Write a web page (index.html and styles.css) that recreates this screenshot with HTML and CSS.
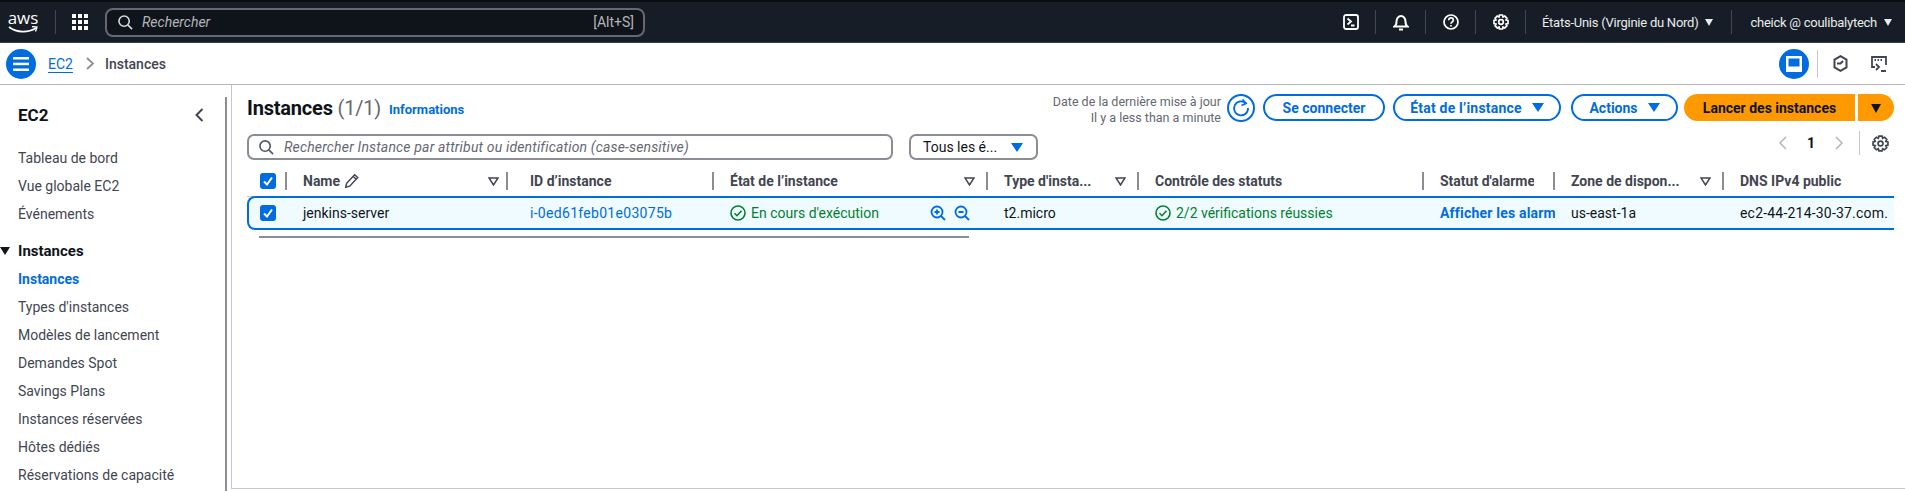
FILE: index.html
```html
<!DOCTYPE html>
<html lang="fr">
<head>
  <meta charset="UTF-8" />
  <title>Instances | EC2</title>
  <link rel="stylesheet" href="styles.css">
</head>
<body>
  <!-- Barre du haut -->
  <header class="topnav">
    <div class="aws-logo">
      <span class="aws-word">aws</span>
      <svg width="30" height="8" viewBox="0 0 30 8"><path d="M1 1c8 6 19 6 27 1" fill="none" stroke="#fff" stroke-width="1.6"/><path d="M24 .5l5 .5-1.500 4.500" fill="none" stroke="#fff" stroke-width="1.300"/></svg>
    </div>
    <span class="nav-sep sep-logo"></span>
    <svg class="apps" width="16" height="16" viewBox="0 0 16 16" fill="#fff"><rect width="4" height="4"/><rect x="6" width="4" height="4"/><rect x="12" width="4" height="4"/><rect y="6" width="4" height="4"/><rect x="6" y="6" width="4" height="4"/><rect x="12" y="6" width="4" height="4"/><rect y="12" width="4" height="4"/><rect x="6" y="12" width="4" height="4"/><rect x="12" y="12" width="4" height="4"/></svg>
    <div class="nav-search">
      <svg width="15" height="15" viewBox="0 0 16 16" fill="none" stroke="#d5dbdb" stroke-width="1.700"><circle cx="6.500" cy="6.500" r="5.500"/><path d="M10.500 10.500L15 15"/></svg>
      <span class="nav-search-text">Rechercher</span>
      <span class="nav-shortcut">[Alt+S]</span>
    </div>
    <div class="nav-right">
      <svg class="nav-icon" width="16" height="16" viewBox="0 0 16 16" fill="none" stroke="#fff" stroke-width="1.800"><rect x="1" y="1" width="14" height="14" rx="2"/><path d="M4.500 4.500L8 7.500 4.500 10.500M8 11.500h3.500"/></svg>
      <span class="nav-sep"></span>
      <svg class="nav-icon" width="16" height="17" viewBox="0 0 16 17" fill="none" stroke="#fff" stroke-width="2"><path d="M1.500 12.500c1.500-1 2-2.500 2-5 0-3 2-5.500 4.500-5.500s4.500 2.500 4.500 5.500c0 2.500.5 4 2 5z"/><path d="M6 15.500h4"/></svg>
      <span class="nav-sep"></span>
      <svg class="nav-icon" width="16" height="16" viewBox="0 0 16 16" fill="none" stroke="#fff" stroke-width="1.700"><circle cx="8" cy="8" r="7"/><path d="M5.800 6.200c0-3 4.500-3 4.500 0 0 1.800-2.300 1.800-2.300 3.500"/><path d="M8 11v1.500"/></svg>
      <span class="nav-sep"></span>
      <svg class="nav-icon" width="16" height="16" viewBox="0 0 16 16" fill="none" stroke="#fff" stroke-width="1.700"><circle cx="8" cy="8" r="2.300"/><path d="M6.500 1h3l.5 2 1.800-.9 2.100 2.100-.9 1.800 2 .5v3l-2 .5.9 1.800-2.100 2.100-1.800-.9-.5 2h-3l-.5-2-1.800.9-2.100-2.100.9-1.800-2-.5v-3l2-.5-.9-1.800 2.100-2.100 1.800.9z"/></svg>
      <span class="nav-sep sep-region"></span>
      <span class="nav-label">États-Unis (Virginie du Nord)</span>
      <span class="nav-caret"></span>
      <span class="nav-sep sep-user"></span>
      <span class="nav-label">cheick @ coulibalytech</span>
      <span class="nav-caret"></span>
    </div>
  </header>

  <!-- Fil d'Ariane -->
  <div class="subbar">
    <span class="round-btn">
      <svg width="16" height="14" viewBox="0 0 16 14" fill="#fff"><rect width="16" height="2.500"/><rect y="5.700" width="16" height="2.500"/><rect y="11.500" width="16" height="2.500"/></svg>
    </span>
    <a class="crumb-link">EC2</a>
    <svg class="crumb-chev" width="8" height="13" viewBox="0 0 8 13" fill="none" stroke="#8c8c94" stroke-width="1.800"><path d="M1 1l6 5.500L1 12"/></svg>
    <span class="crumb-here">Instances</span>
    <div class="subbar-right">
      <span class="round-btn">
        <svg width="16" height="16" viewBox="0 0 16 16"><rect width="16" height="16" fill="#fff"/><rect x="2.500" y="2.500" width="11" height="8" fill="#006ce0"/></svg>
      </span>
      <span class="sub-sep"></span>
      <svg class="sub-icon" width="15" height="17" viewBox="0 0 15 17" fill="none" stroke="#424650" stroke-width="2"><path d="M7.500 1.200l6 3.400v7.800l-6 3.400-6-3.400V4.600z"/><path d="M4 8.500h3.500L10 6" /></svg>
      <svg class="sub-icon last" width="16" height="16" viewBox="0 0 16 16" fill="none" stroke="#424650" stroke-width="1.800"><path d="M4 11H1V1h14v8"/><path d="M3.500 4h1.500M6.500 4H8M9.500 4H11" stroke-width="2"/><path d="M5 8l3 3-3 3M10 15h5"/></svg>
    </div>
  </div>

  <div class="layout">
    <!-- Menu de gauche -->
    <nav class="sidebar">
      <div class="side-head">
        <span class="side-title">EC2</span>
        <svg width="9" height="14" viewBox="0 0 9 14" fill="none" stroke="#424650" stroke-width="2"><path d="M7.500 1L1.500 7l6 6"/></svg>
      </div>
      <a class="side-link">Tableau de bord</a>
      <a class="side-link">Vue globale EC2</a>
      <a class="side-link">Événements</a>
      <div class="side-section"><span class="side-caret"></span>Instances</div>
      <a class="side-link active">Instances</a>
      <a class="side-link">Types d'instances</a>
      <a class="side-link">Modèles de lancement</a>
      <a class="side-link">Demandes Spot</a>
      <a class="side-link">Savings Plans</a>
      <a class="side-link">Instances réservées</a>
      <a class="side-link">Hôtes dédiés</a>
      <a class="side-link">Réservations de capacité</a>
    </nav>
    <span class="side-scroll"></span>

    <main class="content">
      <div class="head-row">
        <h1 class="page-title">Instances <span class="count">(1/1)</span></h1>
        <a class="info-link">Informations</a>
        <div class="actions">
          <div class="updated">Date de la dernière mise à jour<br>Il y a less than a minute</div>
          <span class="refresh">
            <svg width="20" height="20" viewBox="0 0 20 20" fill="none" stroke="#006ce0" stroke-width="1.800"><path d="M15 5.500A7 7 0 1 0 17 10"/><path d="M11.500 1.500l3.500 4-4.500 2" /></svg>
          </span>
          <button class="btn btn-connect">Se connecter</button>
          <button class="btn btn-state">État de l’instance<span class="caret-blue"></span></button>
          <button class="btn btn-actions">Actions<span class="caret-blue"></span></button>
          <div class="launch">
            <button class="launch-main">Lancer des instances</button>
            <button class="launch-drop"><span class="caret-dark"></span></button>
          </div>
        </div>
      </div>

      <div class="filter-row">
        <div class="search">
          <svg width="15" height="15" viewBox="0 0 16 16" fill="none" stroke="#545b64" stroke-width="1.800"><circle cx="6.500" cy="6.500" r="5.500"/><path d="M10.500 10.500L15 15"/></svg>
          <span>Rechercher Instance par attribut ou identification (case-sensitive)</span>
        </div>
        <div class="select">Tous les é...<span class="caret-blue"></span></div>
        <div class="pager">
          <svg width="8" height="14" viewBox="0 0 8 14" fill="none" stroke="#b4b4bb" stroke-width="1.500"><path d="M7 1L1 7l6 6"/></svg>
          <span class="page-num">1</span>
          <svg width="8" height="14" viewBox="0 0 8 14" fill="none" stroke="#b4b4bb" stroke-width="1.500"><path d="M1 1l6 6-6 6"/></svg>
          <span class="pager-sep"></span>
          <svg width="17" height="17" viewBox="0 0 16 16" fill="none" stroke="#424650" stroke-width="1.600"><circle cx="8" cy="8" r="2.300"/><path d="M6.500 1h3l.5 2 1.800-.9 2.100 2.100-.9 1.800 2 .5v3l-2 .5.9 1.800-2.100 2.100-1.800-.9-.5 2h-3l-.5-2-1.800.9-2.100-2.100.9-1.800-2-.5v-3l2-.5-.9-1.800 2.100-2.100 1.800.9z"/></svg>
        </div>
      </div>

      <div class="tbl-head">
        <div class="th th-check"><span class="checkbox"><svg width="12" height="12" viewBox="0 0 12 12" fill="none" stroke="#fff" stroke-width="2"><path d="M2 6.500l3 3 5-7"/></svg></span></div>
        <div class="th th-name">Name
          <svg class="pencil" width="16" height="16" viewBox="0 0 14 14" fill="none" stroke="#424650" stroke-width="1.300"><path d="M1.500 12.500l.8-3.500 7-7.500 2.700 2.500-7 7.500z"/><path d="M8 3l2.700 2.500"/></svg>
          <svg class="sort" width="11" height="9" viewBox="0 0 11 9" fill="none" stroke="#424650" stroke-width="1.500"><path d="M1 1h9L5.500 8z"/></svg></div>
        <div class="th cell-id">ID d’instance</div>
        <div class="th">État de l’instance<svg class="sort" width="11" height="9" viewBox="0 0 11 9" fill="none" stroke="#424650" stroke-width="1.500"><path d="M1 1h9L5.500 8z"/></svg></div>
        <div class="th">Type d'insta...<svg class="sort" width="11" height="9" viewBox="0 0 11 9" fill="none" stroke="#424650" stroke-width="1.500"><path d="M1 1h9L5.500 8z"/></svg></div>
        <div class="th">Contrôle des statuts</div>
        <div class="th"><span class="th-clip">Statut d'alarme</span></div>
        <div class="th">Zone de dispon...<svg class="sort" width="11" height="9" viewBox="0 0 11 9" fill="none" stroke="#424650" stroke-width="1.500"><path d="M1 1h9L5.500 8z"/></svg></div>
        <div class="th no-sep">DNS IPv4 public</div>
      </div>

      <div class="tbl-row">
        <div class="td td-check"><span class="checkbox"><svg width="12" height="12" viewBox="0 0 12 12" fill="none" stroke="#fff" stroke-width="2"><path d="M2 6.500l3 3 5-7"/></svg></span></div>
        <div class="td">jenkins-server</div>
        <div class="td cell-id"><a class="id-link">i-0ed61feb01e03075b</a></div>
        <div class="td status">
          <svg width="16" height="16" viewBox="0 0 16 16" fill="none" stroke="#00802f" stroke-width="1.600"><circle cx="8" cy="8" r="7"/><path d="M4.500 8.200l2.500 2.500 4.500-5"/></svg>
          En cours d'exécution
          <span class="zooms">
            <svg width="16" height="16" viewBox="0 0 16 16" fill="none" stroke="#006ce0" stroke-width="1.800"><circle cx="7" cy="7" r="5.500"/><path d="M11 11l4 4M4.500 7h5M7 4.500v5"/></svg>
            <svg width="16" height="16" viewBox="0 0 16 16" fill="none" stroke="#006ce0" stroke-width="1.800"><circle cx="7" cy="7" r="5.500"/><path d="M11 11l4 4M4.500 7h5"/></svg>
          </span>
        </div>
        <div class="td">t2.micro</div>
        <div class="td status">
          <svg width="16" height="16" viewBox="0 0 16 16" fill="none" stroke="#00802f" stroke-width="1.600"><circle cx="8" cy="8" r="7"/><path d="M4.500 8.200l2.500 2.500 4.500-5"/></svg>
          2/2 vérifications réussies
        </div>
        <div class="td alarm-cell"><a class="alarm-link">Afficher les alarmes</a></div>
        <div class="td">us-east-1a</div>
        <div class="td dns-cell">ec2-44-214-30-37.com.</div>
      </div>
      <div class="tbl-scroll"></div>
    </main>
  </div>
</body>
</html>
```

FILE: styles.css
```css
* {
  box-sizing: border-box;
}

html, body {
  height: 491px;
  overflow: hidden;
}

body {
  margin: 0;
  background: #fff;
  font-family: Roboto, 'Noto Sans', sans-serif;
  font-size: 14px;
  color: #0f141a;
}

button {
  font-family: inherit;
}

/* barre du haut */
.topnav {
  height: 43px;
  background: #161d26;
  border-top: 2px solid #0a0d12;
  border-bottom: 1px solid #3a4049;
  display: flex;
  align-items: center;
  color: #fff;
}

.aws-logo {
  width: 30px;
  margin-left: 8px;
  display: flex;
  flex-direction: column;
  align-items: center;
  line-height: 14px;
}

.aws-word {
  font-family: 'Open Sans', sans-serif;
  font-size: 17px;
  height: 15px;
}

.aws-logo svg {
  display: block;
}

.nav-sep {
  width: 1px;
  height: 24px;
  background: #424650;
}

.sep-logo {
  margin-left: 17px;
}

.apps {
  margin-left: 16px;
}

.nav-search {
  width: 540px;
  height: 29px;
  margin-left: 17px;
  background: #0f141a;
  border: 2px solid #656871;
  border-radius: 8px;
  display: flex;
  align-items: center;
  padding: 0 9px 0 11px;
  color: #b4b4bb;
  font-size: 14px;
}

.nav-search-text {
  font-style: italic;
  margin-left: 9px;
}

.nav-shortcut {
  margin-left: auto;
}

.nav-right {
  margin-left: auto;
  display: flex;
  align-items: center;
  padding-right: 13px;
}

.nav-right .nav-sep {
  margin: 0 16.500px;
}

.nav-right .sep-region {
  margin: 0 16px;
}

.nav-label {
  font-size: 13px;
  color: #e9ebed;
  letter-spacing: -0.25px;
}

.nav-caret {
  width: 0;
  height: 0;
  margin-left: 7px;
  border-left: 4px solid transparent;
  border-right: 4px solid transparent;
  border-top: 7px solid #e9ebed;
}

.nav-right .sep-user {
  margin: 0 18px;
}

/* fil d'ariane */
.subbar {
  height: 42px;
  border-bottom: 1px solid #b4b4bb;
  display: flex;
  align-items: center;
  padding: 0 18px 0 6px;
}

.round-btn {
  width: 30px;
  height: 30px;
  border-radius: 50%;
  background: #006ce0;
  display: flex;
  align-items: center;
  justify-content: center;
}

.crumb-link {
  margin-left: 12px;
  color: #006ce0;
  text-decoration: underline;
  text-underline-offset: 3px;
}

.crumb-chev {
  margin: 0 11px 0 13px;
}

.crumb-here {
  color: #424650;
  font-weight: 500;
}

.subbar-right {
  margin-left: auto;
  display: flex;
  align-items: center;
}

.sub-sep {
  width: 1px;
  height: 28px;
  margin: 0 15px 0 8px;
  background: #c6c6cd;
}

.sub-icon.last {
  margin-left: 23px;
}

/* layout */
.layout {
  display: flex;
  height: 406px;
}

.sidebar {
  width: 225px;
  padding: 18px 0 0 18px;
  display: flex;
  flex-direction: column;
  overflow: hidden;
}

.side-head {
  display: flex;
  align-items: center;
  justify-content: space-between;
  padding-right: 21px;
  height: 24px;
  margin-bottom: 17px;
}

.side-title {
  font-size: 17px;
  font-weight: 700;
}

.side-link {
  height: 28px;
  flex: none;
  line-height: 28px;
  color: #424650;
}

.side-link.active {
  color: #006ce0;
  font-weight: 700;
}

.side-section {
  position: relative;
  height: 28px;
  flex: none;
  margin-top: 9px;
  line-height: 28px;
  font-size: 15px;
  font-weight: 700;
}

.side-caret {
  position: absolute;
  left: -18px;
  top: 10px;
  border-left: 5px solid transparent;
  border-right: 5px solid transparent;
  border-top: 8px solid #0f141a;
}

.side-scroll {
  width: 2px;
  margin-top: 12px;
  background: #8c8c94;
}

.content {
  flex: 1;
  min-width: 0;
  margin-left: 4px;
  border-left: 1px solid #c6c6cd;
  border-bottom: 1px solid #c6c6cd;
  height: 404px;
  padding: 9px 11px 0 15px;
  overflow: hidden;
}

.head-row {
  display: flex;
  align-items: center;
  height: 27px;
}

.page-title {
  margin: 0;
  font-size: 20px;
  font-weight: 700;
  letter-spacing: -0.2px;
}

.count {
  font-weight: 400;
  color: #656871;
}

.info-link {
  margin: 3px 0 0 8px;
  font-size: 13px;
  font-weight: 700;
  color: #006ce0;
}

.actions {
  margin-left: auto;
  display: flex;
  align-items: center;
}

.updated {
  text-align: right;
  font-size: 12.500px;
  line-height: 16px;
  color: #656871;
  padding: 4px 1px 0 0;
}

.refresh {
  width: 28px;
  height: 28px;
  margin: 0 8px 0 5px;
  border: 2px solid #006ce0;
  border-radius: 50%;
  display: flex;
  align-items: center;
  justify-content: center;
}

.btn {
  height: 27px;
  padding: 0;
  background: #fff;
  border: 2px solid #006ce0;
  border-radius: 14px;
  color: #006ce0;
  font-size: 14px;
  font-weight: 700;
  display: flex;
  align-items: center;
  justify-content: center;
}

.btn-connect {
  width: 122px;
}

.btn-state {
  width: 168px;
  margin-left: 8px;
  letter-spacing: 0.2px;
}

.btn-actions {
  width: 107px;
  margin-left: 10px;
}

.caret-blue {
  display: inline-block;
  margin-left: 10px;
  border-left: 6px solid transparent;
  border-right: 6px solid transparent;
  border-top: 9px solid #006ce0;
}

.launch {
  display: flex;
  margin-left: 6px;
}

.launch-main, .launch-drop {
  height: 27px;
  border: 0;
  background: #ff9900;
  color: #0f141a;
  font-size: 14px;
  font-weight: 700;
}

.launch-main {
  width: 171px;
  padding: 0;
  border-radius: 14px 0 0 14px;
}

.launch-drop {
  width: 36px;
  margin-left: 3px;
  padding: 0;
  border-radius: 0 14px 14px 0;
}

.caret-dark {
  display: inline-block;
  border-left: 5px solid transparent;
  border-right: 5px solid transparent;
  border-top: 9px solid #0f141a;
}

.filter-row {
  display: flex;
  align-items: center;
  height: 26px;
  margin-top: 13px;
}

.search {
  width: 646px;
  height: 26px;
  border: 2px solid #8c8c94;
  border-radius: 7px;
  display: flex;
  align-items: center;
  padding: 0 10px;
  gap: 10px;
  font-style: italic;
  color: #656871;
  letter-spacing: 0.17px;
}

.select {
  width: 129px;
  height: 26px;
  margin-left: 16px;
  border: 2px solid #8c8c94;
  border-radius: 7px;
  display: flex;
  align-items: center;
  padding-left: 12px;
}

.select .caret-blue {
  margin-left: 14px;
}

.pager {
  margin-left: auto;
  margin-top: -8px;
  display: flex;
  align-items: center;
  padding-right: 5px;
}

.page-num {
  margin: 0 20px;
  font-weight: 700;
}

.pager-sep {
  width: 1px;
  height: 24px;
  margin: 0 12px 0 16px;
  background: #c6c6cd;
}

/* tableau */
.tbl-head, .tbl-row {
  display: grid;
  grid-template-columns: 40px 221px 206px 274px 151px 285px 131px 169px 170px;
}

.tbl-head {
  height: 37px;
  padding-top: 10px;
  border-bottom: 1px solid #c6c6cd;
  font-weight: 700;
  color: #424650;
}

.th {
  height: 18px;
  margin-top: 2px;
  padding: 0 11px 0 16px;
  border-right: 2px solid #8c8c94;
  display: flex;
  align-items: center;
  white-space: nowrap;
  overflow: hidden;
}

.th.no-sep {
  border-right: 0;
}

.th-check {
  padding: 0 0 0 13px;
}

.th-name {
  padding-right: 7px;
}

.th.cell-id, .td.cell-id {
  padding-left: 22px;
}

.th-clip {
  width: 94px;
  overflow: hidden;
}

.sort {
  margin-left: auto;
}

.pencil {
  margin-left: 4px;
}

.checkbox {
  width: 16px;
  height: 16px;
  border-radius: 3px;
  background: #006ce0;
  display: flex;
  align-items: center;
  justify-content: center;
}

.tbl-row {
  grid-template-columns: 38px 221px 206px 274px 151px 285px 131px 169px 170px;
  height: 34px;
  border: 2px solid #006ce0;
  border-right: 0;
  border-radius: 8px 0 0 8px;
  background: #f0fbff;
  align-items: center;
  margin-top: -1px;
}

.td {
  padding: 0 10px 0 16px;
  white-space: nowrap;
}

.td-check {
  padding: 0 0 0 11px;
}

.id-link {
  color: #006ce0;
  letter-spacing: 0.3px;
}

.status {
  color: #00802f;
  display: flex;
  align-items: center;
  gap: 5px;
}

.zooms {
  margin-left: auto;
  display: flex;
  gap: 8px;
  margin-right: 8px;
}

.alarm-cell {
  padding-right: 0;
  overflow: hidden;
}

.alarm-link {
  color: #006ce0;
  font-weight: 700;
  letter-spacing: 0.2px;
}

.dns-cell {
  padding-right: 0;
  overflow: hidden;
  letter-spacing: 0.2px;
}

.tbl-scroll {
  width: 710px;
  height: 2px;
  margin: 6px 0 0 12px;
  background: #8c8c94;
}
```
